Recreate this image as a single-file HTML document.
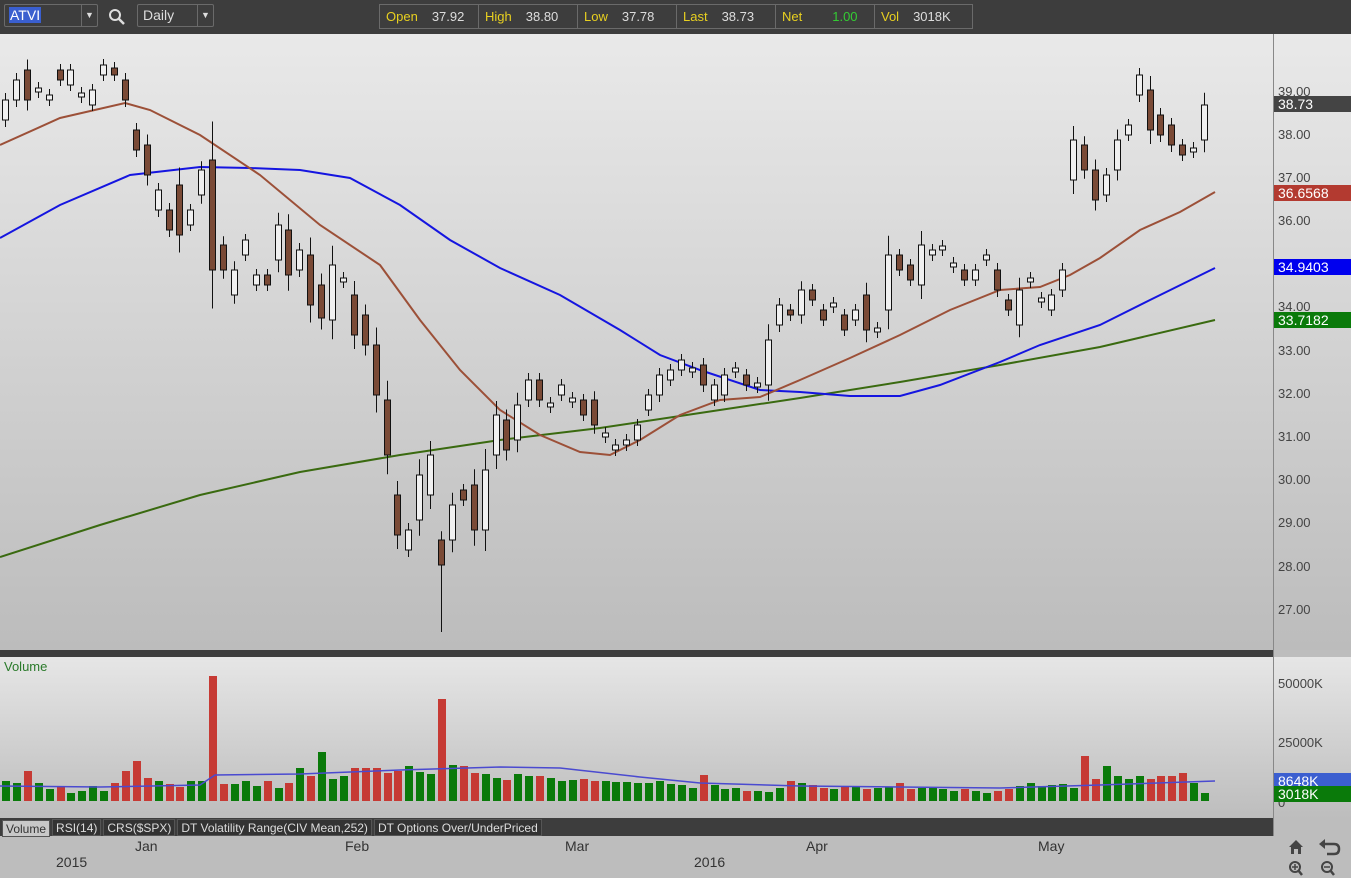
<!DOCTYPE html>
<html><head><meta charset="utf-8"><style>
*{margin:0;padding:0;box-sizing:border-box}
body{width:1351px;height:878px;overflow:hidden;font-family:"Liberation Sans",sans-serif;background:#bdbdbd;position:relative}
.top{position:absolute;left:0;top:0;width:1351px;height:34px;background:#3d3d3d}
.box{position:absolute;top:4px;height:23px;border:1px solid #6a6a6a;border-radius:2px;color:#ddd;font-size:14px;line-height:21px}
.q{position:absolute;top:4px;left:379px;height:25px;border:1px solid #6a6a6a;display:flex;font-size:13px;line-height:23px}
.q div{border-right:1px solid #6a6a6a;padding:0 6px;display:flex;gap:14px}
.q b{font-weight:normal;color:#e8d020}.q i{font-style:normal;color:#ddd}
.ax{position:absolute;left:1273px;width:1px;background:#888}
.lbl{position:absolute;left:1278px;font-size:13px;color:#444}
.tag{position:absolute;left:1274px;width:77px;height:16px;font-size:14px;line-height:16px;color:#fff;padding-left:4px}
.tabs{position:absolute;left:0;top:818px;width:1273px;height:18px;background:#3d3d3d;display:flex;padding-left:2px;gap:2px}
.tab{margin-top:1px;height:17px;font-size:12px;line-height:16px;color:#ddd;background:#333;border:1px solid #555;padding:0 3px;white-space:nowrap}
.dl{position:absolute;font-size:14px;color:#333}
</style></head><body>
<div class="top">
 <div class="box" style="left:4px;width:94px"><span style="background:#3a5fcf;color:#fff;margin-left:4px;padding:0 1px">ATVI</span><span style="position:absolute;right:0;top:0;width:16px;border-left:1px solid #6a6a6a;text-align:center;font-size:9px">▼</span></div>
 <svg style="position:absolute;left:108px;top:8px" width="18" height="18"><circle cx="7" cy="7" r="5" fill="none" stroke="#ddd" stroke-width="2"/><line x1="11" y1="11" x2="16" y2="16" stroke="#ddd" stroke-width="2.5"/></svg>
 <div class="box" style="left:137px;width:77px"><span style="margin-left:5px">Daily</span><span style="position:absolute;right:0;top:0;width:16px;border-left:1px solid #6a6a6a;text-align:center;font-size:9px">▼</span></div>
 <div class="q">
  <div style="width:99px"><b>Open</b><i>37.92</i></div>
  <div style="width:99px"><b>High</b><i>38.80</i></div>
  <div style="width:99px"><b>Low</b><i>37.78</i></div>
  <div style="width:99px"><b>Last</b><i>38.73</i></div>
  <div style="width:99px"><b>Net</b><i style="color:#3c3;margin-left:16px">1.00</i></div>
  <div style="width:97px;border:none"><b>Vol</b><i>3018K</i></div>
 </div>
</div>
<div style="position:absolute;left:0;top:34px;width:1351px;height:616px;background:linear-gradient(#e9e9e9,#bcbcbc)"></div>
<div style="position:absolute;left:0;top:650px;width:1273px;height:7px;background:#3d3d3d"></div>
<div style="position:absolute;left:0;top:657px;width:1351px;height:161px;background:linear-gradient(#e6e6e6,#bdbdbd)"></div>
<div class="ax" style="top:34px;height:616px"></div><div class="ax" style="top:650px;height:186px"></div>
<svg id="c" style="position:absolute;left:0;top:0" width="1273" height="878"></svg>
<div class="lbl" style="top:84px">39.00</div><div class="lbl" style="top:127px">38.00</div><div class="lbl" style="top:170px">37.00</div><div class="lbl" style="top:213px">36.00</div><div class="lbl" style="top:299px">34.00</div><div class="lbl" style="top:343px">33.00</div><div class="lbl" style="top:386px">32.00</div><div class="lbl" style="top:429px">31.00</div><div class="lbl" style="top:472px">30.00</div><div class="lbl" style="top:515px">29.00</div><div class="lbl" style="top:559px">28.00</div><div class="lbl" style="top:602px">27.00</div>
<div class="tag" style="top:96px;background:#444">38.73</div>
<div class="tag" style="top:185px;background:#b33a30">36.6568</div>
<div class="tag" style="top:259px;background:#0000ee">34.9403</div>
<div class="tag" style="top:312px;background:#0a7a0a">33.7182</div>
<div style="position:absolute;left:4px;top:659px;font-size:13px;color:#2a7a2a">Volume</div>
<div class="lbl" style="top:676px">50000K</div><div class="lbl" style="top:735px">25000K</div><div class="lbl" style="top:795px">0</div>
<div class="tag" style="top:773px;background:#3c5fd0">8648K</div>
<div class="tag" style="top:786px;background:#0a7a0a">3018K</div>
<div class="tabs">
 <div class="tab" style="background:#c8c8c8;color:#333;margin-top:2px">Volume</div>
 <div class="tab">RSI(14)</div>
 <div class="tab">CRS($SPX)</div>
 <div class="tab">DT Volatility Range(CIV Mean,252)</div>
 <div class="tab">DT Options Over/UnderPriced</div>
</div>
<div class="dl" style="left:135px;top:838px">Jan</div><div class="dl" style="left:345px;top:838px">Feb</div><div class="dl" style="left:565px;top:838px">Mar</div><div class="dl" style="left:806px;top:838px">Apr</div><div class="dl" style="left:1038px;top:838px">May</div>
<div class="dl" style="left:56px;top:854px">2015</div><div class="dl" style="left:694px;top:854px">2016</div>
<svg style="position:absolute;left:1286px;top:838px" width="60" height="40"><path d="M3 9 L10 2 L17 9 L15 9 L15 16 L12 16 L12 11 L8 11 L8 16 L5 16 L5 9Z" fill="#444"/><path d="M38 6 L48 6 Q53 6 53 11 Q53 16 48 16 L41 16" fill="none" stroke="#444" stroke-width="2.5"/><path d="M33 6 L39 1 L39 11Z" fill="#444"/><circle cx="9" cy="29" r="5" fill="none" stroke="#444" stroke-width="2"/><line x1="12" y1="32" x2="16" y2="37" stroke="#444" stroke-width="2.5"/><path d="M6 29h6M9 26v6" stroke="#444" stroke-width="1.5"/><circle cx="41" cy="29" r="5" fill="none" stroke="#444" stroke-width="2"/><line x1="44" y1="32" x2="48" y2="37" stroke="#444" stroke-width="2.5"/><path d="M38 29h6" stroke="#444" stroke-width="1.5"/></svg>
<script>
var d=[[100,120,1],[80,100,1],[70,100,0],[88,92,1],[95,100,1],[70,80,0],[70,85,1],[93,97,1],[90,105,1],[65,75,1],[68,75,0],[80,100,0],[130,150,0],[145,175,0],[190,210,1],[210,230,0],[185,235,0],[210,225,1],[170,195,1],[160,270,0],[245,270,0],[270,295,1],[240,255,1],[275,285,1],[275,285,0],[225,260,1],[230,275,0],[250,270,1],[255,305,0],[285,318,0],[265,320,1],[278,282,1],[295,335,0],[315,345,0],[345,395,0],[400,455,0],[495,535,0],[530,550,1],[475,520,1],[455,495,1],[540,565,0],[505,540,1],[490,500,0],[485,530,0],[470,530,1],[415,455,1],[420,450,0],[405,440,1],[380,400,1],[380,400,0],[403,407,1],[385,395,1],[398,402,1],[400,415,0],[400,425,0],[433,437,1],[445,450,1],[440,445,1],[425,440,1],[395,410,1],[375,395,1],[370,380,1],[360,370,1],[368,372,1],[365,385,0],[385,400,1],[375,395,1],[368,372,1],[375,385,0],[383,387,1],[340,385,1],[305,325,1],[310,315,0],[290,315,1],[290,300,0],[310,320,0],[303,307,1],[315,330,0],[310,320,1],[295,330,0],[328,332,1],[255,310,1],[255,270,0],[265,280,0],[245,285,1],[250,255,1],[246,250,1],[263,267,1],[270,280,0],[270,280,1],[255,260,1],[270,290,0],[300,310,0],[290,325,1],[278,282,1],[298,302,1],[295,310,1],[270,290,1],[140,180,1],[145,170,0],[170,200,0],[175,195,1],[140,170,1],[125,135,1],[75,95,1],[90,130,0],[115,135,0],[125,145,0],[145,155,0],[148,152,1],[105,140,1]];
var vh=[20,18,30,18,12,14,8,10,15,10,18,30,40,23,20,17,14,20,20,125,17,17,20,15,20,13,18,33,25,49,22,25,33,33,33,28,30,35,29,27,102,36,35,28,27,23,21,27,25,25,23,20,21,22,20,20,19,19,18,18,20,17,16,13,26,16,12,13,10,10,9,13,20,18,16,13,12,15,15,12,13,14,18,12,13,14,12,10,12,10,8,10,12,15,18,15,16,17,13,45,22,35,25,22,25,22,25,25,28,18,8,25];
var vc={19:0,29:1,40:0};
var s='',x0=5,dx=10.9;
function pl(p,c,w){return '<polyline points="'+p+'" fill="none" stroke="'+c+'" stroke-width="'+w+'"/>'}
s+=pl("0,557 100,525 200,495 300,472 400,455 500,440 600,428 700,413 800,398 900,382 1000,365 1100,347 1215,320","#3a6a10",2);
s+=pl("0,238 60,205 130,175 200,167 250,168 300,170 350,178 400,205 450,240 500,268 560,295 620,330 660,355 700,370 760,390 800,392 850,396 900,396 940,385 1000,362 1040,345 1100,325 1150,300 1215,268","#1515e0",2);
s+=pl("0,145 60,118 125,103 150,110 200,135 260,175 320,225 380,265 420,320 460,370 500,410 540,435 580,452 610,455 640,440 680,415 720,400 760,397 800,380 850,358 900,335 950,310 1000,290 1040,287 1070,275 1100,258 1140,230 1180,212 1215,192","#9c5038",2);
for(var i=0;i<d.length;i++){var x=Math.round(x0+i*dx),t=d[i][0],b=d[i][1],h=b-t,wk=Math.max(6,h*0.35);
var lo=b+wk;if(i==40)lo=632;
s+='<line x1="'+x+'.5" y1="'+(t-wk)+'" x2="'+x+'.5" y2="'+lo+'" stroke="#111"/>';
s+='<rect x="'+(x-2.5)+'" y="'+t+'" width="6" height="'+Math.max(h,2)+'" fill="'+(d[i][2]?'#f0f0f0':'#7a4a36')+'" stroke="#111"/>';
var up=(i in vc)?vc[i]:d[i][2];
var v=vh[i]||12;s+='<rect x="'+(x-3)+'" y="'+(801-v)+'" width="8" height="'+v+'" fill="'+(up?'#0a7a0a':'#c63a34')+'"/>';}
s+=pl("0,786 100,787 200,785 215,775 300,774 400,770 500,767 560,768 640,777 700,783 800,786 900,787 1000,788 1100,785 1215,781","#4a4ad0",1.5);
document.getElementById('c').innerHTML=s;
</script>
</body></html>
